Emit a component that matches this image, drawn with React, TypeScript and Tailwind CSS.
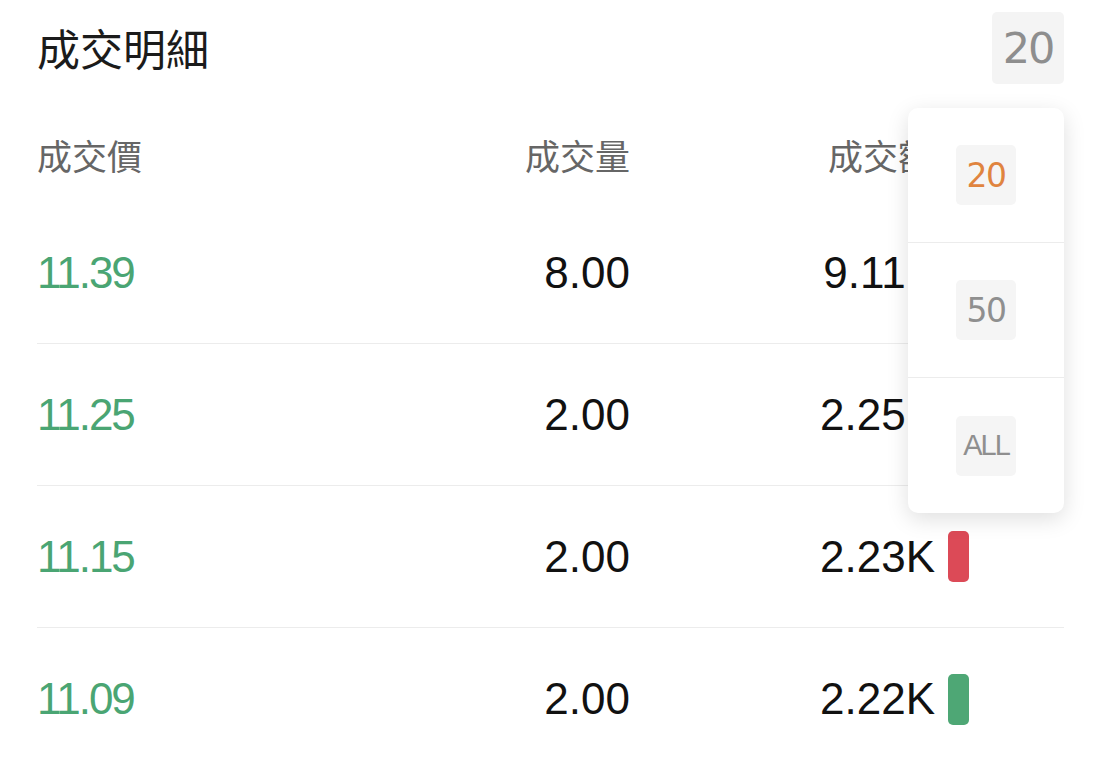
import type { FC } from 'react';

type Trade = { price: string; volume: string; amount: string; side?: 'buy' | 'sell' };

// rows visible in the list, newest first
const trades: Trade[] = [
  { price: '11.39', volume: '8.00', amount: '9.11K' },
  { price: '11.25', volume: '2.00', amount: '2.25K' },
  { price: '11.15', volume: '2.00', amount: '2.23K', side: 'sell' },
  { price: '11.09', volume: '2.00', amount: '2.22K', side: 'buy' },
];

const sizeOptions = ['20', '50', 'ALL'];

const SizeMenu: FC<{ active: string }> = ({ active }) => (
  <div className="absolute left-[908px] top-[108px] w-[156px] bg-white rounded-[10px] shadow-[0_6px_22px_rgba(0,0,0,0.13)] overflow-hidden">
    {sizeOptions.map((opt, i) => (
      <div
        key={opt}
        className={`h-[135px] flex items-center justify-center ${i < sizeOptions.length - 1 ? 'border-b border-[#ececec]' : ''}`}
      >
        <div
          className={`w-[60px] h-[60px] rounded-[5px] bg-[#f5f5f5] flex items-center justify-center text-[33px] leading-none font-['DejaVu_Sans',sans-serif] tracking-[-1.5px] ${
            opt === active ? 'text-[#e0843f]' : 'text-[#8f8f8f]'
          }`}
        >
          {opt === 'ALL' ? <span className="text-[29px] tracking-[-2px] font-['Liberation_Sans',sans-serif]">ALL</span> : opt}
        </div>
      </div>
    ))}
  </div>
);

const App = () => {
  return (
    <div className="relative w-[1100px] h-[767px] overflow-hidden bg-white font-['Liberation_Sans','Noto_Sans_CJK_TC',sans-serif]">
      {/* title bar */}
      <div className="h-[96px] flex items-center justify-between pl-[37px] pr-[36px]">
        <h1 className="text-[43px] text-[#1b1b1b] font-['Noto_Sans_CJK_TC',sans-serif] font-normal leading-none -mt-[2px]">成交明細</h1>
        <button className="w-[72px] h-[72px] rounded-[5px] bg-[#f4f4f4] flex items-center justify-center text-[43px] leading-none text-[#8e8e8e] font-['DejaVu_Sans',sans-serif] tracking-[-2px]">
          20
        </button>
      </div>

      <div className="px-[36px] pl-[37px]">
        {/* column headings */}
        <div className="h-[106px] pt-[12px] grid grid-cols-[293px_300px_339px_95px] items-center text-[35px] text-[#666666] font-['Noto_Sans_CJK_TC',sans-serif]">
          <div>成交價</div>
          <div className="text-right">成交量</div>
          <div className="text-right pr-[36px]">成交額</div>
          <div />
        </div>

        {trades.map((t, i) => (
          <div
            key={i}
            className={`h-[142px] grid grid-cols-[293px_300px_339px_95px] items-center text-[44px] ${
              i < trades.length - 1 ? 'border-b border-[#ececec]' : ''
            }`}
          >
            <div className="text-[#4aa573] tracking-[-2px]">{t.price}</div>
            <div className="text-right text-[#111111]">{t.volume}</div>
            <div className="flex items-center justify-end gap-[13px] text-[#111111]">
              <span>{t.amount}</span>
              <span
                className={`w-[21px] h-[51px] rounded-[5px] ${
                  t.side === 'sell' ? 'bg-[#dc4a57]' : t.side === 'buy' ? 'bg-[#4ea775]' : 'bg-transparent'
                }`}
              />
            </div>
            <div />
          </div>
        ))}
      </div>

      <SizeMenu active="20" />
    </div>
  );
};

export default App;
